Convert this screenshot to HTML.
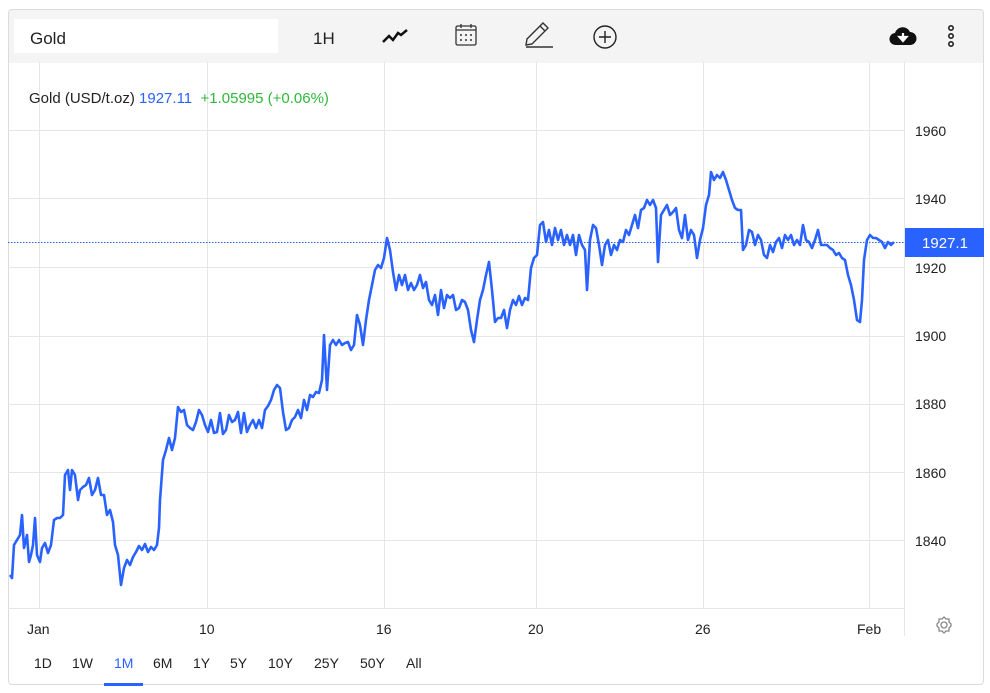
<!DOCTYPE html>
<html><head><style>
body{margin:0;width:990px;height:693px;background:#fff;font-family:"Liberation Sans",sans-serif;overflow:hidden;position:relative}
.box{position:absolute;left:8px;top:9px;width:976px;height:676px;border:1px solid #dcdcdc;border-radius:4px;box-sizing:border-box;overflow:hidden}
.tb{position:absolute;left:0;top:0;width:100%;height:53px;background:#f4f4f4}
.search{position:absolute;left:5px;top:9px;width:264px;height:34px;background:#fff;font-size:17px;line-height:40px;padding-left:16px;box-sizing:border-box;color:#222}
.t{position:absolute;font-size:14px;color:#222}
.ax{font-size:14px;color:#222;position:absolute}
</style></head><body>
<div class="box">
<div class="tb">
<div class="search">Gold</div>
<div class="t" style="left:304px;top:19px;font-size:17px">1H</div>
<svg style="position:absolute;left:372px;top:16px" width="28" height="22" viewBox="0 0 28 22"><path d="M2 16 L8 10 L12 14 L17 7 L20 9 L26 4" fill="none" stroke="#111" stroke-width="2.5"/></svg>
<svg style="position:absolute;left:445px;top:12px" width="24" height="26" viewBox="0 0 24 26"><rect x="2" y="4" width="20" height="19" rx="1.5" fill="none" stroke="#333" stroke-width="1.3"/><line x1="2" y1="8" x2="22" y2="8" stroke="#333" stroke-width="1.3"/><line x1="7" y1="2" x2="7" y2="6" stroke="#333" stroke-width="1.3"/><line x1="17" y1="2" x2="17" y2="6" stroke="#333" stroke-width="1.3"/><g fill="#333"><circle cx="7" cy="13" r="1"/><circle cx="12" cy="13" r="1"/><circle cx="17" cy="13" r="1"/><circle cx="7" cy="18" r="1"/><circle cx="12" cy="18" r="1"/><circle cx="17" cy="18" r="1"/></g></svg>
<svg style="position:absolute;left:513px;top:11px" width="34" height="28" viewBox="0 0 34 28"><path d="M4 24 L5 18 L21 2 L26 7 L10 23 Z M18 5 L23 10" fill="none" stroke="#333" stroke-width="1.4"/><line x1="4" y1="26" x2="31" y2="26" stroke="#333" stroke-width="1.6"/></svg>
<svg style="position:absolute;left:583px;top:14px" width="26" height="26" viewBox="0 0 26 26"><circle cx="13" cy="13" r="11" fill="none" stroke="#222" stroke-width="1.4"/><path d="M13 7 V19 M7 13 H19" stroke="#222" stroke-width="1.4"/></svg>
<svg style="position:absolute;left:880px;top:16px" width="28" height="22" viewBox="0 0 28 22"><path d="M7 19 A6 6 0 0 1 6 7 A8 8 0 0 1 21 6 A6.5 6.5 0 0 1 21 19 Z" fill="#111"/><path d="M14 7 V13 M10.5 11 L14 15 L17.5 11 Z" stroke="#fff" fill="#fff" stroke-width="2.2"/></svg>
<svg style="position:absolute;left:936px;top:14px" width="12" height="26" viewBox="0 0 12 26"><g fill="none" stroke="#222" stroke-width="1.6"><circle cx="6" cy="4" r="2.2"/><circle cx="6" cy="12" r="2.2"/><circle cx="6" cy="20" r="2.2"/></g></svg>
</div>
</div>
<svg style="position:absolute;left:0;top:0" width="990" height="693">
<g stroke="#e6e6e6" stroke-width="1">
<line x1="39.5" y1="62" x2="39.5" y2="608"/><line x1="207.5" y1="62" x2="207.5" y2="608"/><line x1="384.5" y1="62" x2="384.5" y2="608"/><line x1="536.5" y1="62" x2="536.5" y2="608"/><line x1="703.5" y1="62" x2="703.5" y2="608"/><line x1="869.5" y1="62" x2="869.5" y2="608"/>
<line x1="8" y1="130.5" x2="904" y2="130.5"/><line x1="8" y1="198.5" x2="904" y2="198.5"/><line x1="8" y1="267.5" x2="904" y2="267.5"/><line x1="8" y1="336.5" x2="904" y2="336.5"/><line x1="8" y1="404.5" x2="904" y2="404.5"/><line x1="8" y1="472.5" x2="904" y2="472.5"/><line x1="8" y1="540.5" x2="904" y2="540.5"/>
<line x1="904.5" y1="62" x2="904.5" y2="636"/>
<line x1="8" y1="608.5" x2="904" y2="608.5"/>
</g>
<line x1="8" y1="242.5" x2="905" y2="242.5" stroke="#2962ff" stroke-width="1" stroke-dasharray="1.5,1.5"/>
<polyline fill="none" stroke="#2962ff" stroke-width="2.6" stroke-linejoin="round" points="10,575 12,578 14,545 17,540 20,535 22,515 24,548 27,535 29,562 31,555 33,545 35,518 37,555 40,562 42,548 45,543 48,553 51,545 54,520 57,518 60,518 63,515 65,475 68,470 70,490 72,470 75,475 78,500 80,490 83,487 86,485 89,478 92,495 95,490 98,478 101,495 104,495 107,515 110,510 113,522 115,545 118,555 121,585 124,568 127,560 130,565 133,557 136,552 139,546 142,550 145,544 148,552 151,547 154,550 157,545 159,528 160,500 163,460 166,450 169,438 172,450 175,438 178,407 181,412 184,410 187,425 190,428 193,430 196,422 199,410 202,415 205,425 208,432 211,420 214,433 217,432 220,413 223,434 226,430 229,415 232,422 235,420 238,412 241,433 244,413 247,432 250,425 253,420 256,428 259,420 262,428 265,410 268,406 271,400 274,390 277,385 280,388 283,412 286,430 289,428 292,420 295,417 298,410 301,418 304,400 307,410 310,395 313,397 316,392 319,393 322,380 324,335 327,390 330,345 333,340 336,345 339,340 342,345 345,343 348,342 351,350 354,345 357,315 360,325 363,345 366,320 369,300 372,285 375,270 378,265 381,268 384,258 387,238 390,250 393,272 396,290 399,275 402,285 405,275 408,290 411,283 414,290 417,285 420,275 423,288 426,282 429,300 432,305 435,295 438,315 441,290 444,308 447,295 450,298 453,295 456,310 459,308 462,300 465,302 468,310 471,330 474,342 477,320 480,300 483,290 486,275 489,262 492,290 495,322 498,318 501,318 504,310 507,328 510,310 513,300 516,305 519,296 522,305 525,298 528,300 531,268 534,258 537,255 540,225 543,222 546,242 549,230 552,245 555,228 558,240 561,230 564,245 567,235 570,245 573,235 576,255 579,235 582,245 585,250 587,290 590,240 593,225 596,228 599,245 602,265 605,245 608,240 611,255 614,245 617,250 620,240 623,242 626,230 629,235 632,225 635,215 638,228 641,210 644,208 647,200 650,205 653,200 656,208 658,262 661,215 664,210 667,205 670,215 673,212 676,208 679,230 682,238 685,215 688,240 691,230 694,235 697,258 700,240 703,228 706,205 709,195 711,172 714,180 717,175 720,178 723,172 726,180 729,190 732,200 735,208 738,210 741,210 743,250 746,245 749,230 752,232 755,245 758,235 761,240 764,255 767,258 770,245 773,252 776,242 779,238 782,248 785,235 788,240 791,235 794,245 797,240 800,245 803,225 806,240 809,242 812,248 815,240 818,230 821,245 824,245 827,245 830,248 833,250 836,255 839,253 842,258 845,260 848,275 851,285 854,300 857,320 860,322 862,300 864,260 867,240 870,235 873,238 876,238 879,240 882,242 885,248 888,242 891,245 894,242"/>
<rect x="905" y="228" width="79" height="29" fill="#2962ff"/>
<text x="945" y="248" fill="#fff" font-size="15" font-family="Liberation Sans" text-anchor="middle">1927.1</text>
<line x1="104" y1="684.5" x2="143" y2="684.5" stroke="#2962ff" stroke-width="3"/>
<g transform="translate(944,625)" fill="none" stroke="#888" stroke-width="1.3"><circle r="3"/><path d="M0,-8 L2,-6 L5,-6 L5,-3 L7,-1 L7,1 L5,3 L5,6 L2,6 L0,8 L-2,6 L-5,6 L-5,3 L-7,1 L-7,-1 L-5,-3 L-5,-6 L-2,-6 Z"/></g>
</svg>
<div class="t" style="left:29px;top:90px;font-size:15px">Gold (USD/t.oz) <span style="color:#2962ff">1927.11</span>&nbsp; <span style="color:#2fb83b">+1.05995 (+0.06%)</span></div>
<div class="ax" style="left:915px;top:123px">1960</div>
<div class="ax" style="left:915px;top:191px">1940</div>
<div class="ax" style="left:915px;top:260px">1920</div>
<div class="ax" style="left:915px;top:328px">1900</div>
<div class="ax" style="left:915px;top:396px">1880</div>
<div class="ax" style="left:915px;top:465px">1860</div>
<div class="ax" style="left:915px;top:533px">1840</div>
<div class="ax" style="left:27px;top:621px">Jan</div>
<div class="ax" style="left:199px;top:621px">10</div>
<div class="ax" style="left:376px;top:621px">16</div>
<div class="ax" style="left:528px;top:621px">20</div>
<div class="ax" style="left:695px;top:621px">26</div>
<div class="ax" style="left:857px;top:621px">Feb</div>
<div class="ax" style="left:34px;top:655px">1D</div>
<div class="ax" style="left:72px;top:655px">1W</div>
<div class="ax" style="left:114px;top:655px;color:#2962ff">1M</div>
<div class="ax" style="left:153px;top:655px">6M</div>
<div class="ax" style="left:193px;top:655px">1Y</div>
<div class="ax" style="left:230px;top:655px">5Y</div>
<div class="ax" style="left:268px;top:655px">10Y</div>
<div class="ax" style="left:314px;top:655px">25Y</div>
<div class="ax" style="left:360px;top:655px">50Y</div>
<div class="ax" style="left:406px;top:655px">All</div>
</body></html>
